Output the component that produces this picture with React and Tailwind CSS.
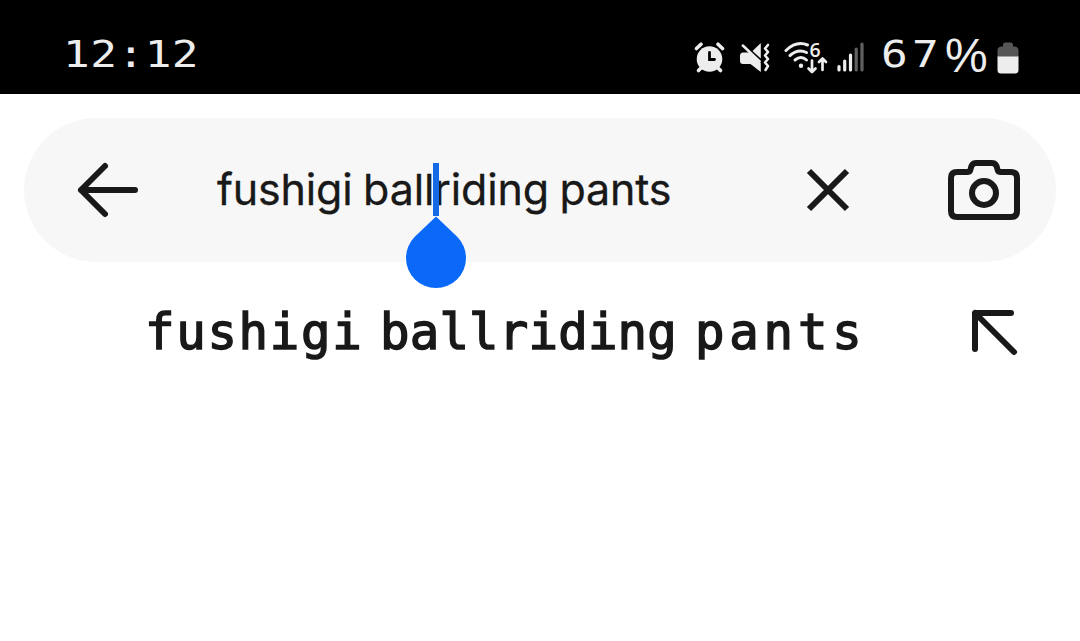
import React from "react";

function AlarmIcon() {
  return (
    <svg className="h-8 w-8 shrink-0" viewBox="0 0 32 32">
      <g stroke="#ededed" strokeLinecap="round" strokeWidth="3.6">
        <path d="M2.500 6.500 7 2.200M28.500 6.500 24 2.200" />
        <path d="M8 25 4.500 28.500M23 25 26.500 28.500" />
      </g>
      <circle cx="15.500" cy="17" r="12.800" fill="#ededed" />
      <path d="M15.500 10.500V17.500H20.500" fill="none" stroke="#000" strokeWidth="2.800" strokeLinecap="round" />
    </svg>
  );
}

function MutedIcon() {
  return (
    <svg className="h-8 w-8 shrink-0" viewBox="0 0 32 32">
      <path d="M0 14Q0 10.500 3 10.500H9L20.800 21V30L10.500 22H3Q0 22 0 19Z" fill="#ededed" />
      <path d="M12.500 9 20.800 1V16.500Z" fill="#ededed" />
      <path d="M2.800 3.500 19.700 19.500" stroke="#ededed" strokeWidth="2.500" strokeLinecap="round" />
      <path d="M28 3 25 6.500 28 10 25 13.500 28 17 25 20.500 28 24 25.500 28" fill="none" stroke="#ededed" strokeWidth="2.600" strokeLinecap="round" strokeLinejoin="round" />
    </svg>
  );
}

function WifiIcon() {
  return (
    <div className="relative h-9 w-11 shrink-0">
      <svg className="h-9 w-11" viewBox="0 0 44 36">
        <g fill="none" stroke="#ededed" strokeWidth="3" strokeLinecap="round" strokeLinejoin="round">
          <path d="M2 9.500Q12.500 -.5 23.500 4" />
          <path d="M6 14.500Q14 7.500 22.500 11.500" />
          <path d="M11 19Q17 14 22.500 19" />
          <path d="M28 19.500V30.500M24.500 27.500 28 31 31.500 27.500" strokeWidth="2.700" />
          <path d="M38.500 29V18M35 21 38.500 17.500 42 21" strokeWidth="2.700" />
        </g>
        <circle cx="17" cy="24.700" r="2.200" fill="#ededed" />
      </svg>
      <span className="absolute left-[25.5px] top-[-5px] font-['Open_Sans',sans-serif] text-[19.5px] font-semibold leading-[27px]">6</span>
    </div>
  );
}

function SignalIcon() {
  return (
    <svg className="h-8 w-7 shrink-0" viewBox="0 0 28 32">
      <g strokeWidth="3.200" strokeLinecap="round">
        <path d="M2 25.500V29M7.700 20V29M13.500 14V29" stroke="#ededed" />
        <path d="M19.200 8V29M25 3V29" stroke="#606060" />
      </g>
    </svg>
  );
}

function BatteryIcon() {
  return (
    <svg className="h-8 w-[22px] shrink-0" viewBox="0 0 22 32">
      <path d="M6 3Q6 .5 8.500 .5H13.500Q16 .5 16 3V4.500H18Q21.500 5 21.500 8V15H.5V8Q.5 5 4 4.500H6Z" fill="#565656" />
      <path d="M.5 14.500H21.500V28Q21.500 31.500 18 31.500H4Q.5 31.500 .5 28Z" fill="#ededed" />
    </svg>
  );
}

function StatusBar() {
  return (
    <header className="flex h-[94px] items-start bg-black pl-[63px] font-['DejaVu_Sans_Mono',monospace] text-[37px] text-[#ededed]">
      <div className="mt-[32px] w-[151px] shrink-0">
        <div className="w-max origin-left scale-x-[1.2] whitespace-nowrap leading-[46px] tracking-[0.4px]">12:12</div>
      </div>
      <div className="ml-[480px] mt-[42px]"><AlarmIcon /></div>
      <div className="ml-[14px] mt-[42px]"><MutedIcon /></div>
      <div className="ml-[12px] mt-[41px]"><WifiIcon /></div>
      <div className="ml-[9px] mt-[41px]"><SignalIcon /></div>
      <div className="ml-[16px] mt-[32px] flex w-[116px] shrink-0 whitespace-nowrap leading-[46px]">
        <div className="w-16 shrink-0">
          <div className="w-max origin-left scale-x-[1.2] tracking-[3.5px]">67</div>
        </div>
        <div className="font-['Liberation_Sans',sans-serif] text-[48px] leading-[48px]">%</div>
      </div>
      <div className="mt-[42px]"><BatteryIcon /></div>
    </header>
  );
}

function TextCaret() {
  return (
    <svg className="absolute left-[189px] top-0 h-[128px] w-[60px]" viewBox="0 0 60 128">
      <rect x="27" y="1" width="6" height="53" fill="#1669e5" />
      <path d="M30 54.500 51.200 74.800A30 30 0 1 1 8.800 74.800Z" fill="#0a69f8" />
    </svg>
  );
}

function SearchBar() {
  return (
    <div className="mx-6 mt-6 flex h-36 items-center rounded-full bg-[#f7f7f7] text-[#191919]">
      <svg className="ml-[51px] h-[60px] w-[66px]" viewBox="0 0 66 60" fill="none" stroke="currentColor" strokeWidth="6" strokeLinecap="round" strokeLinejoin="round">
        <path d="M60 30H6M30 6 6 30 30 54" />
      </svg>
      <div className="relative ml-[76px] h-14 w-[460px] whitespace-nowrap font-['Inter',sans-serif] text-[43px] leading-[54px] tracking-[-0.18px] [word-spacing:-1.2px] [-webkit-text-stroke:0.3px_#191919]">
        fushigi ballriding pants
        <TextCaret />
      </div>
      <svg className="ml-[127px] h-12 w-12" viewBox="0 0 48 48" fill="none" stroke="currentColor" strokeWidth="6">
        <path d="m5 5 38 38M43 5l-38 38" />
      </svg>
      <svg className="ml-24 h-[60px] w-[72px]" viewBox="0 0 72 60" fill="none" stroke="currentColor" strokeWidth="6" strokeLinejoin="round">
        <path d="M9 12H20Q22 12 22.500 9.500 23.500 3 28 3H44Q48.500 3 49.500 9.500 50 12 52 12H63Q69 12 69 18V51Q69 57 63 57H9Q3 57 3 51V18Q3 12 9 12Z" />
        <circle cx="36" cy="33" r="12" />
      </svg>
    </div>
  );
}

function Suggestion() {
  return (
    <div className="flex h-[120px] pl-[145px] pt-[35px] text-[#191919]">
      <div className="flex w-[820px] whitespace-pre font-['DejaVu_Sans_Mono',monospace] text-[49px] leading-[72px] [-webkit-text-stroke:1.5px_#191919]">
        <span className="w-[235px] tracking-[1.7px]">fushigi </span>
        <span className="w-[315px] tracking-[0.2px]">ballriding </span>
        <span className="tracking-[4.8px]">pants</span>
      </div>
      <svg className="ml-[5px] mt-[10px] h-[54px] w-[54px]" viewBox="0 0 54 54" fill="none" stroke="currentColor" strokeWidth="6" strokeLinecap="round" strokeLinejoin="round">
        <path d="M5 42V6H41M5 6 44 45" />
      </svg>
    </div>
  );
}

export default function App() {
  return (
    <main className="h-[641px] w-[1080px] overflow-hidden bg-white">
      <StatusBar />
      <SearchBar />
      <Suggestion />
    </main>
  );
}
